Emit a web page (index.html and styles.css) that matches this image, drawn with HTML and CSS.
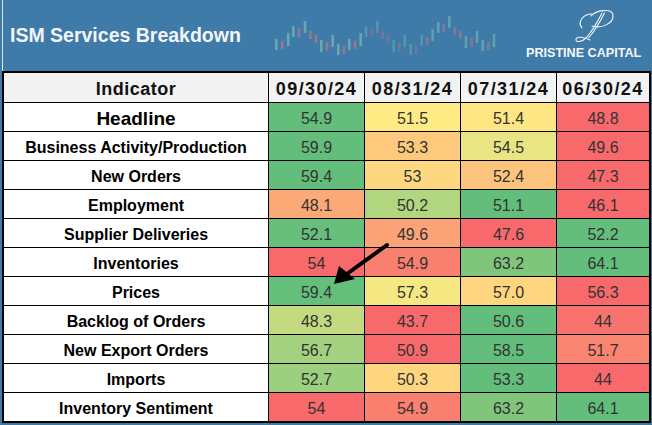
FILE: index.html
```html
<!DOCTYPE html>
<html>
<head>
<meta charset="utf-8">
<link rel="stylesheet" href="styles.css">
</head>
<body>
<div class="page">
  <header class="banner">
    <div class="title">ISM Services Breakdown</div>
    <svg class="chart" width="230" height="62" viewBox="0 0 230 62">
      <g class="up g1">
        <rect x="4" y="39" width="2.6" height="11"/><rect x="16" y="33" width="2.6" height="13"/><rect x="21" y="26" width="2.6" height="11"/><rect x="32.7" y="21" width="2.6" height="12"/><rect x="49" y="40" width="2.6" height="12"/><rect x="60.4" y="35" width="2.6" height="12"/><rect x="66" y="44" width="2.6" height="11"/><rect x="77" y="39" width="2.6" height="11"/><rect x="88.4" y="33" width="2.6" height="13"/>
      </g>
      <g class="dn g1">
        <rect x="10" y="41" width="2.6" height="8"/><rect x="26.7" y="28" width="2.6" height="9"/><rect x="38" y="31" width="2.6" height="8"/><rect x="43.7" y="35" width="2.6" height="8"/><rect x="54.7" y="42" width="2.6" height="9"/><rect x="71.7" y="46" width="2.6" height="8"/><rect x="82.7" y="41" width="2.6" height="8"/>
      </g>
      <g class="up g2">
        <rect x="93.7" y="26" width="2.6" height="11"/><rect x="105" y="21" width="2.6" height="12"/><rect x="121.4" y="40" width="2.6" height="12"/><rect x="132.4" y="35" width="2.6" height="12"/><rect x="138.4" y="44" width="2.6" height="11"/><rect x="149.4" y="35" width="2.6" height="11"/>
      </g>
      <g class="dn g2">
        <rect x="99.4" y="28" width="2.6" height="8"/><rect x="110.4" y="31" width="2.6" height="8"/><rect x="116" y="35" width="2.6" height="8"/><rect x="127" y="42" width="2.6" height="9"/><rect x="143.7" y="46" width="2.6" height="8"/>
      </g>
      <g class="up g3">
        <rect x="160.4" y="29" width="2.6" height="12"/><rect x="166" y="22" width="2.6" height="11"/><rect x="177" y="16" width="2.6" height="12"/><rect x="193.7" y="36" width="2.6" height="12"/><rect x="204.7" y="31" width="2.6" height="12"/><rect x="210.4" y="40" width="2.6" height="11"/><rect x="221.7" y="34" width="2.6" height="13"/>
      </g>
      <g class="dn g3">
        <rect x="155" y="37" width="2.6" height="8"/><rect x="171.4" y="24" width="2.6" height="8"/><rect x="182.7" y="27" width="2.6" height="8"/><rect x="188" y="31" width="2.6" height="8"/><rect x="199.4" y="38" width="2.6" height="9"/><rect x="216" y="42" width="2.6" height="8"/>
      </g>
    </svg>
    <div class="logo">
      <svg class="monogram" width="42" height="36" viewBox="0 0 42 36">
        <path d="M17 8 C22 2, 38 0, 39 7 C40 15, 28 21, 18 18"/>
        <path d="M28 5 C24 13, 19 22, 12 30"/>
        <path d="M30.5 5 C26.5 13, 21.5 22, 14.5 30"/>
        <path d="M12 30 C8 34, 1 35, 2 31 C3 28, 10 29, 16 32"/>
        <path d="M8 20 C3 14, 9 6, 18 6"/>
      </svg>
      <div class="brand">PRISTINE CAPITAL</div>
    </div>
  </header>

  <section class="grid">
    <div class="hd label-hd">Indicator</div>
    <div class="hd">09/30/24</div>
    <div class="hd">08/31/24</div>
    <div class="hd">07/31/24</div>
    <div class="hd">06/30/24</div>

    <div class="lb big">Headline</div>
    <div class="v" style="background:#63be7b">54.9</div>
    <div class="v" style="background:#ffeb84">51.5</div>
    <div class="v" style="background:#fee783">51.4</div>
    <div class="v" style="background:#f8696b">48.8</div>

    <div class="lb">Business Activity/Production</div>
    <div class="v" style="background:#63be7b">59.9</div>
    <div class="v" style="background:#fdc97d">53.3</div>
    <div class="v" style="background:#eae583">54.5</div>
    <div class="v" style="background:#f8696b">49.6</div>

    <div class="lb">New Orders</div>
    <div class="v" style="background:#63be7b">59.4</div>
    <div class="v" style="background:#fed880">53</div>
    <div class="v" style="background:#fcc47d">52.4</div>
    <div class="v" style="background:#f8696b">47.3</div>

    <div class="lb">Employment</div>
    <div class="v" style="background:#fbaa77">48.1</div>
    <div class="v" style="background:#b2d580">50.2</div>
    <div class="v" style="background:#63be7b">51.1</div>
    <div class="v" style="background:#f8696b">46.1</div>

    <div class="lb">Supplier Deliveries</div>
    <div class="v" style="background:#67bf7b">52.1</div>
    <div class="v" style="background:#fba276">49.6</div>
    <div class="v" style="background:#f8696b">47.6</div>
    <div class="v" style="background:#63be7b">52.2</div>

    <div class="lb">Inventories</div>
    <div class="v" style="background:#f8696b">54</div>
    <div class="v" style="background:#f9806f">54.9</div>
    <div class="v" style="background:#7fc67c">63.2</div>
    <div class="v" style="background:#63be7b">64.1</div>

    <div class="lb">Prices</div>
    <div class="v" style="background:#64bf7b">59.4</div>
    <div class="v" style="background:#f5e882">57.3</div>
    <div class="v" style="background:#fed680">57.0</div>
    <div class="v" style="background:#f8696b">56.3</div>

    <div class="lb">Backlog of Orders</div>
    <div class="v" style="background:#c4da81">48.3</div>
    <div class="v" style="background:#f8696b">43.7</div>
    <div class="v" style="background:#63be7b">50.6</div>
    <div class="v" style="background:#f8736d">44</div>

    <div class="lb">New Export Orders</div>
    <div class="v" style="background:#a4d17f">56.7</div>
    <div class="v" style="background:#f8696b">50.9</div>
    <div class="v" style="background:#63be7b">58.5</div>
    <div class="v" style="background:#f98470">51.7</div>

    <div class="lb">Imports</div>
    <div class="v" style="background:#9ccf7e">52.7</div>
    <div class="v" style="background:#ffd680">50.3</div>
    <div class="v" style="background:#63be7b">53.3</div>
    <div class="v" style="background:#f8696b">44</div>

    <div class="lb">Inventory Sentiment</div>
    <div class="v" style="background:#f8696b">54</div>
    <div class="v" style="background:#f9806f">54.9</div>
    <div class="v" style="background:#7fc67c">63.2</div>
    <div class="v" style="background:#63be7b">64.1</div>
  </section>

  <svg class="arrow" width="652" height="425" viewBox="0 0 652 425">
    <line x1="387" y1="245" x2="344" y2="276"/>
    <polygon points="334,284 339,266 355,279"/>
  </svg>
</div>
</body>
</html>
```

FILE: styles.css
```css
html, body {
  margin: 0;
  padding: 0;
}

body {
  width: 652px;
  height: 425px;
  overflow: hidden;
  background: #3e7ba8;
  font-family: "Liberation Sans", Arial, sans-serif;
}

.page {
  position: relative;
  width: 652px;
  height: 425px;
}

.banner {
  height: 71px;
  display: flex;
  align-items: flex-start;
  box-sizing: border-box;
  border-left: 1px solid #3e7ba8;
}

.banner::before {
  content: "";
  width: 1px;
  height: 71px;
  background: #dfe8f0;
  margin-left: 1px;
}

.title {
  width: 268px;
  box-sizing: border-box;
  padding: 23px 0 0 7px;
  font-size: 19.5px;
  line-height: 24px;
  font-weight: bold;
  color: #f2f5f8;
  white-space: nowrap;
}

.chart {
  display: block;
  flex: none;
}

.chart .up { fill: #72b3b4; }
.chart .dn { fill: #b17686; }
.chart .g1 { opacity: 0.8; }
.chart .g2 { opacity: 0.45; }
.chart .g3 { opacity: 0.65; }

.logo {
  margin-left: auto;
  margin-right: 9px;
  width: 117px;
  display: flex;
  flex-direction: column;
}

.monogram {
  display: block;
  margin: 8px 0 0 48px;
  fill: none;
  stroke: #f4f7fa;
  stroke-width: 1.1;
  stroke-linecap: round;
}

.brand {
  margin-top: 2px;
  font-size: 12.6px;
  line-height: 15px;
  font-weight: bold;
  color: #f4f7fa;
  white-space: nowrap;
}

.grid {
  margin-left: 2px;
  width: 649px;
  box-sizing: border-box;
  border: 2px solid #000;
  background: #000;
  display: grid;
  grid-template-columns: 264px 95px 95px 95px 92px;
  grid-template-rows: 29px repeat(11, 28px);
  gap: 1px;
}

.grid > div {
  display: flex;
  align-items: center;
  justify-content: center;
  padding-top: 3px;
  box-sizing: border-box;
  white-space: nowrap;
}

.hd {
  background: #f2f2f2;
  color: #111;
  font-weight: bold;
  font-size: 18px;
  letter-spacing: 1.4px;
}

.label-hd {
  letter-spacing: 0.5px;
}

.lb {
  background: #fff;
  color: #000;
  font-weight: bold;
  font-size: 16px;
}

.lb.big {
  font-size: 19px;
}

.v {
  font-size: 16px;
  color: #333;
}

.arrow {
  position: absolute;
  left: 0;
  top: 0;
  pointer-events: none;
}

.arrow line {
  stroke: #000;
  stroke-width: 4;
  stroke-linecap: round;
}

.arrow polygon {
  fill: #000;
}
```
